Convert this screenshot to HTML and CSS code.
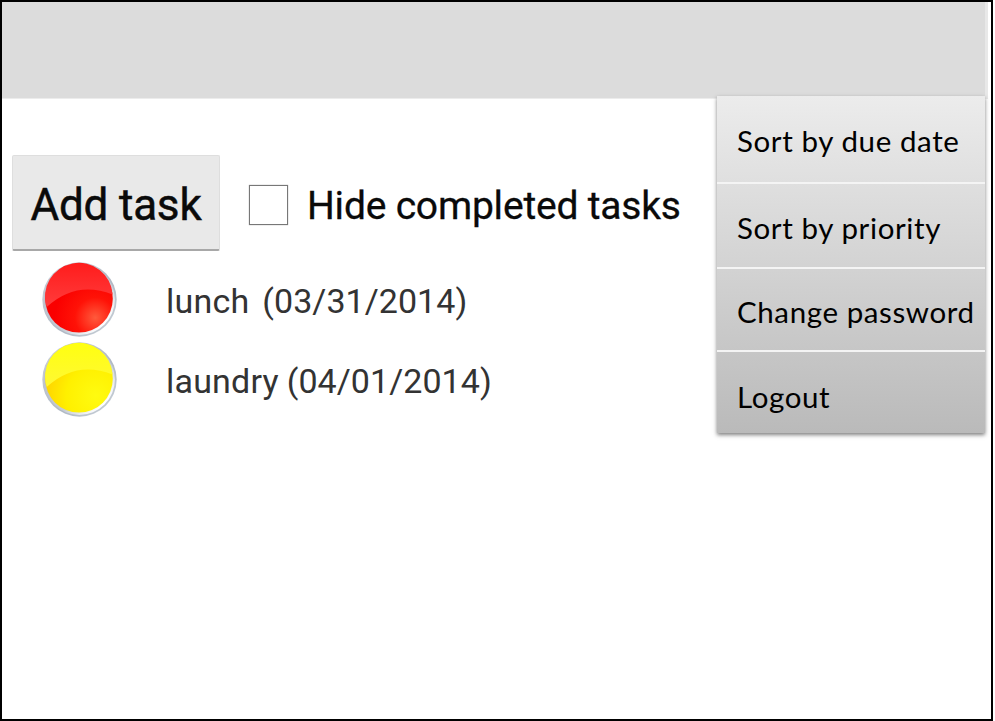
FILE: index.html
```
<!DOCTYPE html>
<html lang="en">
<head>
<meta charset="utf-8">
<title>Tasks</title>
<link rel="stylesheet" href="styles.css">
</head>
<body>
<div class="screen">
  <header class="bar"></header>
  <main class="content">
    <div class="toolbar">
      <button class="add" type="button"><span class="add-text">Add task</span></button>
      <span class="check"></span>
      <span class="check-label">Hide completed tasks</span>
    </div>
    <ul class="tasks">
      <li class="task">
        <svg class="ball" viewBox="0 0 76 78">
          <defs>
            <linearGradient id="rim" x1="0" y1="0" x2="1" y2="1"><stop offset="0" stop-color="#cdd1da"/><stop offset=".6" stop-color="#b0b9c4"/><stop offset="1" stop-color="#cdd5dc"/></linearGradient>
            <linearGradient id="gap" x1="0" y1="0" x2="1" y2="1"><stop offset="0" stop-color="#b8bcc8"/><stop offset=".6" stop-color="#c4cad4"/><stop offset=".85" stop-color="#ffffff"/></linearGradient>
            <radialGradient id="red" cx=".74" cy=".78" r=".6"><stop offset="0" stop-color="#ff5a3c"/><stop offset=".5" stop-color="#ff1207"/><stop offset="1" stop-color="#fa0000"/></radialGradient>
            <linearGradient id="redTop" x1="0" y1="0" x2="0" y2="1"><stop offset="0" stop-color="#ff1c1c"/><stop offset="1" stop-color="#ff3c3c"/></linearGradient>
            <radialGradient id="yellow" cx=".75" cy=".75" r=".8"><stop offset="0" stop-color="#fffb10"/><stop offset=".55" stop-color="#fff000"/><stop offset="1" stop-color="#ffd000"/></radialGradient>
            <linearGradient id="yellowTop" x1="0" y1="0" x2="0" y2="1"><stop offset="0" stop-color="#ffff10"/><stop offset="1" stop-color="#fff834"/></linearGradient>
          </defs>
          <circle cx="37.5" cy="37.5" r="37.2" fill="url(#rim)"/>
          <circle cx="37.3" cy="37.4" r="35.6" fill="url(#gap)"/>
          <circle cx="37" cy="36.8" r="33.8" fill="url(#red)"/>
          <path d="M4.7 45A33.8 33.8 0 1 1 70.6 32.5Q34 18 4.7 45Z" fill="url(#redTop)"/>
        </svg>
        <span class="name">lunch</span><span class="date date-lunch">(03/31/2014)</span>
      </li>
      <li class="task">
        <svg class="ball" viewBox="0 0 76 78">
          <circle cx="37.5" cy="37.5" r="37.2" fill="url(#rim)"/>
          <circle cx="37.3" cy="37.4" r="35.6" fill="url(#gap)"/>
          <circle cx="37" cy="36.8" r="33.8" fill="url(#yellow)"/>
          <path d="M4.7 45A33.8 33.8 0 1 1 70.6 32.5Q34 18 4.7 45Z" fill="url(#yellowTop)"/>
        </svg>
        <span class="name">laundry</span><span class="date">(04/01/2014)</span>
      </li>
    </ul>
  </main>
  <nav class="menu">
    <a class="item due">Sort by due date</a>
    <a class="item priority">Sort by priority</a>
    <a class="item password">Change password</a>
    <a class="item logout">Logout</a>
  </nav>
</div>
</body>
</html>
```
FILE: styles.css
```
* { box-sizing: border-box; }
body { margin: 0; background: #fff; font-family: Roboto, sans-serif; color: #0a0a0a; }
.screen { position: relative; width: 993px; height: 721px; border: 2px solid #000; overflow: hidden; }
.bar { width: 986px; height: 97px; background: #dcdcdc; border-right: 3px solid #e8e8e8; border-bottom: 1px solid #ececec; }
.content { padding: 56px 0 0 10px; }
.toolbar { display: flex; align-items: center; height: 96px; white-space: nowrap; }
.add { width: 208px; height: 96px; padding: 4px 0 0; border: 1px solid #dedede; border-bottom: 2px solid #a8a8a8; border-radius: 2px; background: #e9e9e9; font: 400 44px/1 Roboto, sans-serif; letter-spacing: -.2px; color: #0a0a0a; -webkit-text-stroke: .5px #0a0a0a; }
.check { width: 39px; height: 40px; margin: 3px 0 0 29px; border: 1px solid #777; background: #fff; box-shadow: 0 0 1px #999; }
.check-label { margin: 6px 0 0 19px; font-size: 39px; letter-spacing: -.2px; line-height: 48px; -webkit-text-stroke: .3px #0a0a0a; }
.tasks { list-style: none; margin: 10px 0 0 30px; padding: 0; }
.task { display: flex; align-items: center; height: 80px; font-size: 34px; line-height: 40px; color: #333; white-space: nowrap; }
.ball { width: 76px; height: 78px; margin-right: 48px; }
.name { letter-spacing: .2px; }
.date { margin-left: 8px; letter-spacing: .05px; }
.date-lunch { margin-left: 13px; }
.menu { position: absolute; left: 715px; top: 94px; width: 268px; height: 337px; display: grid; grid-template-rows: 88px 85px 83px 81px; background: linear-gradient(#ececec, #bababa); box-shadow: 0 2px 4px rgba(0,0,0,.5); font-family: Lato, sans-serif; font-size: 29.5px; letter-spacing: .6px; color: #000; }
.item { display: flex; align-items: center; padding: 3px 0 0 20px; white-space: nowrap; border-bottom: 2px solid #f4f4f4; }
.priority { padding-top: 4px; }
.logout { padding-top: 7px; border-bottom: 0; }
```
